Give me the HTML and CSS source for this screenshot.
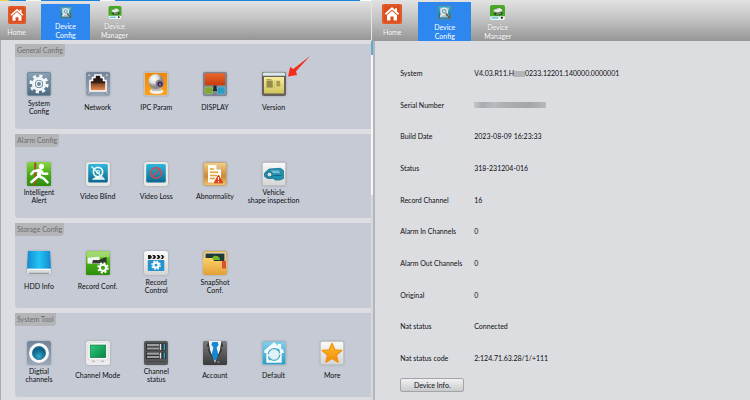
FILE: index.html
```html
<!DOCTYPE html>
<html lang="en">
<head>
<meta charset="utf-8">
<title>Device Config</title>
<link rel="stylesheet" href="styles.css">
</head>
<body>
<svg class="defs" aria-hidden="true">
  <defs>
    <linearGradient id="slate" x2="0" y2="1"><stop stop-color="#8ba3b6"/><stop offset="1" stop-color="#4c6a80"/></linearGradient>
    <linearGradient id="steel" x2="0" y2="1"><stop stop-color="#72839a"/><stop offset="1" stop-color="#9aa8b8"/></linearGradient>
    <linearGradient id="port" x2="0" y2="1"><stop stop-color="#15100e"/><stop offset=".5" stop-color="#38231a"/><stop offset=".55" stop-color="#8a4a24"/><stop offset="1" stop-color="#f0935a"/></linearGradient>
    <linearGradient id="orange" x2="0" y2="1"><stop stop-color="#ee8500"/><stop offset="1" stop-color="#ffa21c"/></linearGradient>
    <linearGradient id="red" x2="0" y2="1"><stop stop-color="#e9672c"/><stop offset="1" stop-color="#c93b0c"/></linearGradient>
    <linearGradient id="green" x2="0" y2="1"><stop stop-color="#8bd541"/><stop offset=".5" stop-color="#47ae16"/><stop offset="1" stop-color="#2c8d0c"/></linearGradient>
    <linearGradient id="teal" x2="0" y2="1"><stop stop-color="#2fb8dc"/><stop offset="1" stop-color="#09678e"/></linearGradient>
    <linearGradient id="white" x2="0" y2="1"><stop stop-color="#fafafa"/><stop offset="1" stop-color="#d5d5d5"/></linearGradient>
    <linearGradient id="gold" x2="0" y2="1"><stop stop-color="#f3d08b"/><stop offset=".6" stop-color="#c98b35"/><stop offset="1" stop-color="#edc475"/></linearGradient>
    <linearGradient id="yellow" x2="0" y2="1"><stop stop-color="#f6efa0"/><stop offset="1" stop-color="#d0c35b"/></linearGradient>
    <linearGradient id="folder" x2="0" y2="1"><stop stop-color="#fcd166"/><stop offset="1" stop-color="#e2a038"/></linearGradient>
    <linearGradient id="dark" x2="0" y2="1"><stop stop-color="#7b7b7b"/><stop offset="1" stop-color="#3b3b3b"/></linearGradient>
    <linearGradient id="sky" x2="0" y2="1"><stop stop-color="#84d0ea"/><stop offset="1" stop-color="#2b9cc6"/></linearGradient>
    <linearGradient id="star" x2="0" y2="1"><stop stop-color="#ffc02e"/><stop offset="1" stop-color="#f28b0a"/></linearGradient>
    <linearGradient id="disk"><stop stop-color="#1787d0"/><stop offset=".5" stop-color="#22c4f4"/><stop offset="1" stop-color="#1787d0"/></linearGradient>
    <linearGradient id="screen" x2="1" y2="1"><stop stop-color="#2fca7c"/><stop offset="1" stop-color="#078345"/></linearGradient>
    <radialGradient id="ball" cx=".35" cy=".3"><stop stop-color="#fff"/><stop offset=".6" stop-color="#dcdcdc"/><stop offset="1" stop-color="#8d8a88"/></radialGradient>
    <radialGradient id="orb" cy=".75"><stop stop-color="#33a8cc"/><stop offset="1" stop-color="#0d6289"/></radialGradient>
    <symbol id="i-home" viewBox="0 0 20 20">
      <rect width="20" height="20" rx="2" fill="#dd4e1f"/><rect x="1" y="1" width="18" height="18" rx="1.5" fill="none" stroke="#e9754b" stroke-width=".6"/>
      <path d="M10 3 2.8 9.6l1.2 1.3 6-5.4 6 5.4 1.2-1.3-2.2-2V4.2h-2v1.5z" fill="#fff"/><path d="M5 11.2l5-4.4 5 4.4V16.5h-3.4v-4H8.4v4H5z" fill="#fff"/>
    </symbol>
    <symbol id="i-config" viewBox="0 0 20 20">
      <rect width="20" height="20" rx="2.5" fill="#4a86b0"/><rect x="2" y="2" width="16" height="15.5" fill="url(#teal)"/>
      <path d="M3.5 3.5h13l-2 6 2 7h-13l1.5-6z" fill="#a9c3cd"/>
      <circle cx="9.5" cy="8.5" r="4.2" fill="#7ea6b8" stroke="#eef3f5" stroke-width="1.7"/><circle cx="9.5" cy="8.5" r="1.5" fill="#d8e4e8"/>
      <path d="M4.5 15.5 8 11.5" stroke="#eef0ec" stroke-width="1.8"/><path d="M12 11.5l5 5.5" stroke="#5c4b3c" stroke-width="2"/><path d="M13 11.3l4.3 4.5" stroke="#d9ad75" stroke-width=".8"/>
    </symbol>
    <symbol id="i-manager" viewBox="0 0 20 20">
      <rect width="20" height="20" rx="2.5" fill="#48a824"/><path d="M0 15h20v2.5a2.5 2.5 0 0 1-2.5 2.5h-15A2.5 2.5 0 0 1 0 17.5z" fill="#f2f4f3"/>
      <path d="M4 6.2 12 3.2l4.5 2.4v3l-7 1.8L4.8 9z" fill="#e9edeb" stroke="#2f5a20" stroke-width=".6"/><path d="M6 6.8l6-2" stroke="#9fa8a3" stroke-width=".8"/>
      <path d="M5 10l4.5 1.4 7-1.8.5 2.4-3 1.6H6.5z" fill="#2c4225"/><path d="M8.5 12.3l6-.8" stroke="#dfe6e1" stroke-width=".9"/>
      <path d="M2 17.3h9" stroke="#35b7db" stroke-width="1.6"/><circle cx="15.8" cy="17" r="1.4" fill="#111"/>
    </symbol>
  </defs>
</svg>

<main class="screens">
  <section class="screen">
    <div class="strip"></div>
    <nav class="bar">
      <a class="tab home" href="#"><svg class="tab-icon big"><use href="#i-home"/></svg><span>Home</span></a>
      <a class="tab active" href="#"><svg class="tab-icon"><use href="#i-config"/></svg><span>Device<br>Config</span></a>
      <a class="tab" href="#"><svg class="tab-icon"><use href="#i-manager"/></svg><span>Device<br>Manager</span></a>
    </nav>
    <div class="groups">
      <section class="group">
        <h2>General Config</h2>
        <div class="items">
          <button class="item"><svg viewBox="0 0 24 24"><rect x=".5" y=".5" width="23" height="23" rx="1.5" fill="url(#slate)" stroke="#71899a"/><circle cx="12" cy="12" r="8.1" fill="none" stroke="#f1f5f7" stroke-width="3" stroke-dasharray="3.2 3.16"/><circle cx="12" cy="12" r="5.6" fill="none" stroke="#f1f5f7" stroke-width="3"/><circle cx="12" cy="12" r="2.6" fill="#6d8799" stroke="#eef3f5" stroke-width="1.2"/></svg><span>System<br>Config</span></button>
          <button class="item"><svg viewBox="0 0 24 24"><rect width="24" height="24" rx="2" fill="url(#steel)"/><g fill="#b9bdc2" stroke="#687482" stroke-width=".6"><circle cx="3" cy="3.3" r="1.7"/><circle cx="21" cy="3.3" r="1.7"/><circle cx="3" cy="20.8" r="1.7"/><circle cx="21" cy="20.8" r="1.7"/></g><path d="M4 19V8.5h2.5V5.5H9V3h6v2.5h2.5v3H20V19z" fill="url(#port)" stroke="#fff" stroke-width="1.5"/></svg><span>Network</span></button>
          <button class="item"><svg viewBox="0 0 24 24"><rect x=".5" y=".5" width="23" height="23" rx="1.5" fill="url(#orange)" stroke="#c9c1b4"/><ellipse cx="12.5" cy="19.3" rx="7" ry="2.6" fill="#f5f2ee"/><path d="M7 14.5h10l.5 4.5H8z" fill="#c3bdb8"/><circle cx="12" cy="9.6" r="7.6" fill="url(#ball)"/><circle cx="15.7" cy="11.8" r="4" fill="#877d86"/><circle cx="16" cy="12" r="2.6" fill="#38284c"/><circle cx="16" cy="12.4" r="1.1" fill="#a46bc2"/></svg><span>IPC Param</span></button>
          <button class="item"><svg viewBox="0 0 24 24"><rect width="24" height="24" rx="2" fill="#7b8593"/><rect x="1.8" y="1.3" width="20.4" height="12" fill="url(#red)"/><path d="M10.5 13.5h3v3.2l2 2.3h-7l2-2.3z" fill="#25272b"/><rect x="1.8" y="15" width="7.8" height="7" rx=".8" fill="#7ea832" stroke="#b3c58a" stroke-width=".5"/><rect x="14.4" y="15" width="7.8" height="7" rx=".8" fill="#279ec1" stroke="#8ec6d8" stroke-width=".5"/></svg><span>DISPLAY</span></button>
          <div class="marked">
            <button class="item"><svg viewBox="0 0 24 24"><rect width="24" height="24" rx="2" fill="#67605b"/><path d="M.7 3.8V2A1.5 1.5 0 0 1 2.2.5h19.6A1.5 1.5 0 0 1 23.3 2v1.8z" fill="#d9e8ec"/><rect x="2" y="5" width="20" height="16.5" fill="url(#yellow)"/><rect x="4.5" y="8.6" width="6.3" height="7" fill="#978d49"/><path d="M4.5 7.7h5" stroke="#877b36" stroke-width=".8"/><rect x="14.3" y="8.8" width="3.8" height="5.6" fill="#a79c50"/><path d="M12.6 8v8M19 12v2" stroke="#bdb05b" stroke-width=".6"/></svg><span>Version</span></button>
            <svg class="arrow" viewBox="0 0 22 21"><path d="M22 0 8 15.2l1 3.8-9 1.5L2.2 11l3.1 2z" fill="#f22d1c"/></svg>
          </div>
        </div>
      </section>
      <section class="group">
        <h2>Alarm Config</h2>
        <div class="items">
          <button class="item"><svg viewBox="0 0 24 24"><rect width="24" height="24" rx="1.5" fill="url(#green)"/><path d="M7.2.5h2v23h-2z" fill="#ad4b23"/><circle cx="14.4" cy="4.4" r="2.6" fill="#fff"/><path d="M12.2 8 6.7 9.2 4.3 12M12 8.8l-.8 5.4L4.4 20M11.6 14l5.2 2.5 3.7 3.8M13.8 8.5l2.4 3.2h4" fill="none" stroke="#fff" stroke-width="2.5" stroke-linecap="round" stroke-linejoin="round"/><path d="M11 7.5h4.2l-1.5 8-3.5-.8z" fill="#fff"/></svg><span>Intelligent<br>Alert</span></button>
          <button class="item"><svg viewBox="0 0 24 24"><rect width="24" height="24" rx="3" fill="#e9e8e5"/><rect x="2.2" y="2" width="19.6" height="18.6" rx="1.5" fill="url(#teal)"/><g fill="none" stroke="#eef7fa"><circle cx="12" cy="10" r="4.6" stroke-width="1.8"/><circle cx="12" cy="10" r="1.5" stroke-width="1.2"/><path d="M7.5 17c2-2 7-2 9 0z" stroke-width="1.4"/><path d="M5.5 4.5l13 13" stroke-width="1.3"/></g></svg><span>Video Blind</span></button>
          <button class="item"><svg viewBox="0 0 24 24"><rect width="24" height="24" rx="3" fill="#e9e8e5"/><rect x="2.2" y="2" width="19.6" height="18.6" rx="1.5" fill="url(#teal)"/><circle cx="12" cy="11" r="5.2" fill="none" stroke="#d6474c" stroke-width="1.5"/><path d="M15.7 7.3l-7.4 7.4" stroke="#d6474c" stroke-width="1.5"/></svg><span>Video Loss</span></button>
          <button class="item"><svg viewBox="0 0 24 24"><rect x=".5" y=".5" width="23" height="23" rx="2" fill="url(#gold)" stroke="#c7a876"/><path d="M5 3h8.5L18 7.5V20.5H5z" fill="#fdfaf0"/><path d="M13.5 3v4.5H18z" fill="#d6b777"/><path d="M7 7h4M7 10.2h8M7 13.4h7M7 16.6h5" stroke="#dca23c" stroke-width="1.5"/><path d="M15.5 13l4.2 7.8h-8.4z" fill="#df3e15" stroke="#df3e15" stroke-width="1" stroke-linejoin="round"/><path d="M15.5 15.3v2.8M15.5 19v1.2" stroke="#fff" stroke-width="1.1"/></svg><span>Abnormality</span></button>
          <button class="item"><svg viewBox="0 0 24 24"><rect x=".4" y=".4" width="23.2" height="23.2" rx="1.5" fill="url(#white)" stroke="#bcbcbc" stroke-width=".8"/><path d="M2.5 11 7 7l11.5-.7L21.5 8.500v8L18 18H13l-1.500-1.500H5.500L2.500 14.500z" fill="#218fae" stroke="#0c6c8b" stroke-width=".7"/><path d="M8.500 8.500h8.500l1 2.800h-7z" fill="#75bdd0"/><circle cx="7.500" cy="12.500" r="2.600" fill="#d9dfe1" stroke="#147694" stroke-width="1.100"/><path d="M12 13.500h7.500" stroke="#0a607d" stroke-width=".8"/></svg><span>Vehicle<br>shape inspection</span></button>
        </div>
      </section>
      <section class="group">
        <h2>Storage Config</h2>
        <div class="items">
          <button class="item"><svg viewBox="0 0 24 24"><path d="M1 0h22l1 18H0z" fill="url(#disk)"/><path d="M0 17.800h24V22a1.600 1.600 0 0 1-1.600 1.600H1.600A1.600 1.600 0 0 1 0 22z" fill="#d9dcdf"/><path d="M.3 18.300h23.400" stroke="#fff"/><path d="M2 22.300h20" stroke="#6b6e70" stroke-width=".8"/></svg><span>HDD Info</span></button>
          <button class="item"><svg viewBox="0 0 24 24"><rect width="24" height="24" rx="1.5" fill="url(#green)"/><path d="M.5 1.5A1 1 0 0 1 1.5.5h21a1 1 0 0 1 1 1V6H.5z" fill="#b1dd85" opacity=".7"/><path d="M1.5 6.5l12-.7v7.5l-12-.7z" fill="#f3f3ef"/><path d="M7 9h8v3.5H6z" fill="#343b30"/><path d="M14 8.500 20.500 6v7.200L14 11.500z" fill="#2c3828"/><circle cx="17" cy="16.800" r="4.800" fill="none" stroke="#fff" stroke-width="1.800" stroke-dasharray="2 1.770"/><circle cx="17" cy="16.800" r="3.100" fill="#46a11d" stroke="#fff" stroke-width="2"/></svg><span>Record Conf.</span></button>
          <button class="item"><svg viewBox="0 0 24 24"><rect width="24" height="24" rx="3" fill="url(#white)"/><rect x="3.800" y="9" width="16.500" height="11" rx="1" fill="#2692ce"/><path d="M4 4h16.300v4H4z" fill="#efefef"/><path d="M4 4h2.500l1.600 2-1.600 2H4zM8.200 4h2.400l1.600 2-1.600 2H8.200l1.500-2zM12.500 4h2.400l1.600 2-1.600 2h-2.400L14 6zM16.700 4h2l1.600 2-1.600 2h-2l1.500-2z" fill="#1b1b1b"/><circle cx="12" cy="14.200" r="4.100" fill="none" stroke="#f4fafd" stroke-width="1.500" stroke-dasharray="1.700 1.520"/><circle cx="12" cy="14.200" r="2.500" fill="none" stroke="#f4fafd" stroke-width="2.200"/></svg><span>Record<br>Control</span></button>
          <button class="item"><svg viewBox="0 0 24 24"><path d="M0 3A3 3 0 0 1 3 0h18a3 3 0 0 1 3 3v18a3 3 0 0 1-3 3H3a3 3 0 0 1-3-3z" fill="#e3ab45"/><rect x="2" y="2" width="20" height="9" fill="#203b36" stroke="#f4f1e6"/><path d="M8.500 9a4.300 4.300 0 0 1 8.600 0z" fill="#70b72b"/><path d="M0 7h9l2.300 3H24v11a3 3 0 0 1-3 3H3a3 3 0 0 1-3-3z" fill="url(#folder)"/><path d="M19 10h4v7.500h-4z" fill="#dd4f32"/></svg><span>SnapShot<br>Conf.</span></button>
        </div>
      </section>
      <section class="group">
        <h2>System Tool</h2>
        <div class="items">
          <button class="item"><svg viewBox="0 0 24 24"><rect width="24" height="24" rx="2.5" fill="url(#steel)"/><circle cx="12" cy="12" r="10" fill="#f7f7f7"/><circle cx="12" cy="12" r="6.600" fill="url(#orb)" stroke="#2c7898" stroke-width=".8"/></svg><span>Digtial<br>channels</span></button>
          <button class="item"><svg viewBox="0 0 24 24"><rect width="24" height="24" rx="2.5" fill="#ececec"/><rect x="2" y="1.800" width="20" height="17.200" rx="2.5" fill="#fdfdfd" stroke="#c9c9c9" stroke-width=".6"/><rect x="4.200" y="4" width="15.600" height="12.600" fill="url(#screen)" stroke="#0a6c3d" stroke-width=".6"/><path d="M6 20.300h3M15 20.300h3" stroke="#aaa" stroke-width=".9"/></svg><span>Channel Mode</span></button>
          <button class="item"><svg viewBox="0 0 24 24"><rect width="24" height="24" rx="2" fill="#555759"/><g fill="#303234"><rect x="2" y="2.300" width="20" height="7.200"/><rect x="2" y="10.800" width="20" height="7.200"/></g><path d="M3 4.200h12M3 7.500h12M3 12.700h12M3 16h12" stroke="#9c9fa1" stroke-width="2.200"/><path d="M16.500 3v6M16.500 11.500v6" stroke="#dedede" stroke-width="1.500"/><path d="M20.300 3v6M20.300 11.500v6" stroke="#21a8da" stroke-width="1.400"/><path d="M3 20.500h18" stroke="#454749"/></svg><span>Channel<br>status</span></button>
          <button class="item"><svg viewBox="0 0 24 24"><rect width="24" height="24" rx="1.5" fill="url(#dark)"/><path d="M5.500 0h13L17 9l-5 13L6.800 9z" fill="#eef2f5"/><path d="M9.400 1h5.200l1 2.800-2 3 2.200 8.200-3.800 5L8.200 15l2.200-8.200-2-3z" fill="#1688d2"/><path d="M5.500 0 3.800 5 6 7 4.800 8.800 12 22.500 6.800 9zM18.500 0l1.700 5L18 7l1.200 1.800L12 22.500 17.200 9z" fill="#333537"/><path d="M14.500 21h2" stroke="#aaa"/></svg><span>Account</span></button>
          <button class="item"><svg viewBox="0 0 24 24"><rect x=".4" y=".4" width="23.200" height="23.200" rx="1.5" fill="url(#sky)" stroke="#8bb9ca" stroke-width=".8"/><path d="M12 1.300 2.300 9.500V12h2v9.800h15.400V12h2V9.500L19 7.200V3h-3v1.700z" fill="#f3fafc"/><circle cx="12" cy="13.500" r="5.800" fill="#def1f6" stroke="#49a8c6" stroke-width="1.200" stroke-dasharray="16 2.200"/><path d="M16 7.200l2.200 2.500-3.200.4zM8 19.800l-2.200-2.500 3.200-.4z" fill="#49a8c6"/></svg><span>Default</span></button>
          <button class="item"><svg viewBox="0 0 24 24"><rect x=".4" y=".4" width="23.200" height="23.200" rx="2" fill="url(#white)" stroke="#c2c2c2" stroke-width=".8"/><path d="M12 2.300l2.800 6.500 7 .6-5.300 4.700 1.600 7L12 17.400l-6.100 3.700 1.600-7L2.200 9.400l7-.6z" fill="url(#star)" stroke="#ef940f" stroke-width="1.300" stroke-linejoin="round"/></svg><span>More</span></button>
        </div>
      </section>
    </div>
  </section>

  <section class="screen info">
    <nav class="bar">
      <a class="tab home" href="#"><svg class="tab-icon big"><use href="#i-home"/></svg><span>Home</span></a>
      <a class="tab active" href="#"><svg class="tab-icon"><use href="#i-config"/></svg><span>Device<br>Config</span></a>
      <a class="tab" href="#"><svg class="tab-icon"><use href="#i-manager"/></svg><span>Device<br>Manager</span></a>
    </nav>
    <div class="details">
      <div class="rail"></div>
      <div class="content">
        <dl>
          <div><dt>System</dt><dd>V4.03.R11.H<i class="mask short"></i>0233.12201.140000.0000001</dd></div>
          <div><dt>Serial Number</dt><dd><i class="mask"></i></dd></div>
          <div><dt>Build Date</dt><dd>2023-08-09 16:23:33</dd></div>
          <div><dt>Status</dt><dd>318-231204-016</dd></div>
          <div><dt>Record Channel</dt><dd>16</dd></div>
          <div><dt>Alarm In Channels</dt><dd>0</dd></div>
          <div><dt>Alarm Out Channels</dt><dd>0</dd></div>
          <div><dt>Original</dt><dd>0</dd></div>
          <div><dt>Nat status</dt><dd>Connected</dd></div>
          <div><dt>Nat status code</dt><dd>2:124.71.63.28/1/+111</dd></div>
        </dl>
        <button class="device-info">Device Info.</button>
      </div>
    </div>
  </section>
</main>
</body>
</html>
```
FILE: styles.css
```css
* { box-sizing: border-box; }

body {
  margin: 0;
  background: #dcdde1;
  color: #0c0e11;
  font: 7px/8px Lato, "Open Sans", sans-serif;
}

button { font: inherit; color: inherit; }

.defs { position: absolute; width: 0; height: 0; }

.screens {
  display: grid;
  grid-template-columns: 49.5% 1fr;
  min-height: 100vh;
}

.screen { display: flex; flex-direction: column; }

.strip {
  height: 1px;
  background: linear-gradient(90deg, #e9d54a 2%, #1785dd 3% 7%, #f4f7f9 7% 11%, #1785dd 11% 27%, #f4f7f9 27% 31%, #1785dd 31% 97%, #fff 97%);
}

.bar {
  display: flex;
  height: 39px;
  background: linear-gradient(#e2e2e2, #c4c4c4 45%, #969696);
}

.tab {
  display: flex;
  flex-direction: column;
  align-items: center;
  width: 49px;
  margin-top: 3px;
  padding-top: 2px;
  color: #fff;
  line-height: 9px;
  text-align: center;
  text-decoration: none;
  text-shadow: 0 0 1px #888;
}

.tab.home { width: 33px; margin-right: 8px; }
.tab.active { background: #2d87ee; text-shadow: none; }

.tab-icon { width: 14px; height: 14px; margin-bottom: 3px; }
.tab-icon.big { width: 18px; height: 18px; margin-bottom: 4px; }

.groups {
  flex: 1;
  display: flex;
  flex-direction: column;
  gap: 5px;
  padding: 4px 0 3px 14px;
  border-left: 1px solid #a8abb1;
}

.group {
  flex: 1;
  background: #c5cad4;
  border-radius: 0 0 0 4px;
}

.group h2 {
  width: fit-content;
  margin: 0 0 15px;
  padding: 0 2px;
  background: #b4b5b7;
  border-radius: 0 0 4px 0;
  color: #6b6e73;
  font-size: 7px;
  font-weight: 400;
  line-height: 13px;
}

.items {
  display: grid;
  grid-template-columns: repeat(6, 48px);
  justify-content: space-between;
  padding-right: 15px;
}

.item {
  display: flex;
  flex-direction: column;
  align-items: center;
  gap: 2px;
  width: 100%;
  padding: 0;
  border: 0;
  background: none;
  white-space: nowrap;
}

.item svg {
  width: 24px;
  height: 24px;
  filter: drop-shadow(0 0 1px #9a9fa8);
}

.item span {
  display: flex;
  align-items: center;
  height: 17px;
  text-align: center;
}

.marked { position: relative; }

.arrow {
  position: absolute;
  left: 38px;
  top: -16px;
  width: 22px;
  height: 21px;
}

.info .bar { height: 41px; padding-left: 1px; border-left: 1px solid #e6e6e6; }
.info .tab { width: 53px; margin-top: 2px; padding-top: 3px; }
.info .tab.home { width: 38px; margin-right: 7px; padding-top: 2px; }
.info .tab-icon { width: 15px; height: 15px; }
.info .big { width: 20px; height: 20px; }

.details { flex: 1; display: flex; }

.rail {
  width: 4px;
  border-right: 2px solid #b5b6b9;
  background: linear-gradient(#63aacb 14px, #f8f8f9 14px 43%, #d3d8db 43%);
}

.content {
  flex: 1;
  display: flex;
  flex-direction: column;
  align-items: flex-start;
  padding: 27px 8px 8px 25px;
}

dl {
  flex: 1;
  display: flex;
  flex-direction: column;
  justify-content: space-between;
  width: 100%;
  margin: 0 0 15px;
  line-height: 10px;
}

dl div { display: grid; grid-template-columns: 74px 1fr; }
dd { margin: 0; }

.mask {
  display: inline-block;
  width: 72px;
  height: 6px;
  background: linear-gradient(90deg, #c5c6c8, #a9abad 8px, #b5bcc1 20px, #afb0b2 30px, #a4a5a7 55px, #b8b9bc);
}

.mask.short { width: 11px; background: #b4b5b8; vertical-align: -1px; }

.device-info {
  width: 64px;
  height: 14px;
  padding: 0;
  border: 1px solid #a3a4a7;
  border-radius: 2px;
  background: linear-gradient(#f1f1f2, #c9cacc);
  line-height: 11px;
}
```
